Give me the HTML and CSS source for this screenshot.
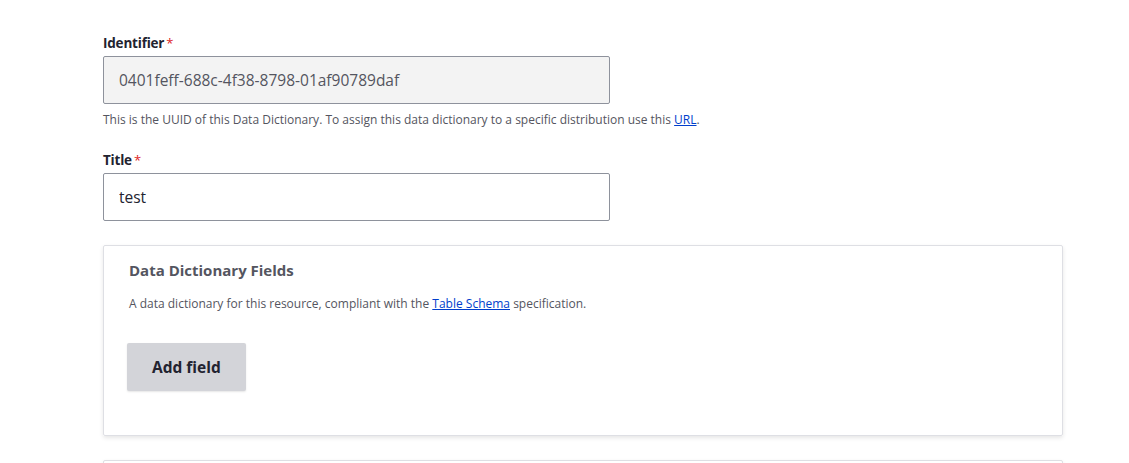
FILE: index.html
```html
<!DOCTYPE html>
<html>
<head>
<meta charset="utf-8">
<link rel="stylesheet" href="styles.css">
</head>
<body>
<form class="form">
  <div class="item">
    <label class="label">Identifier<span class="req">*</span></label>
    <input class="input input--disabled" type="text" value="0401feff-688c-4f38-8798-01af90789daf" disabled>
    <div class="desc">This is the UUID of this Data Dictionary. To assign this data dictionary to a specific distribution use this <a href="#">URL</a>.</div>
  </div>
  <div class="item item--title">
    <label class="label">Title<span class="req">*</span></label>
    <input class="input" type="text" value="test">
  </div>
  <fieldset class="card">
    <div class="card-title">Data Dictionary Fields</div>
    <div class="card-desc">A data dictionary for this resource, compliant with the <a href="#">Table Schema</a> specification.</div>
    <button type="button" class="btn">Add field</button>
  </fieldset>
  <div class="card card--next"></div>
</form>
</body>
</html>
```
FILE: styles.css
```css
html, body {
  margin: 0;
  padding: 0;
  background: #fff;
}
body {
  font-family: "Open Sans", "Noto Sans", sans-serif;
  color: #222330;
}
.form {
  padding: 34px 0 0 103px;
  width: 960px;
}
.item {
  display: flex;
  flex-direction: column;
  align-items: flex-start;
}
.item--title {
  margin-top: 23px;
}
.label {
  font-size: 13.5px;
  font-weight: 700;
  line-height: 18px;
  margin-bottom: 4px;
  display: flex;
  align-items: center;
  letter-spacing: -0.2px;
}
.req {
  color: #dc2323;
  font-size: 13px;
  margin-left: 2px;
  line-height: 18px;
  font-weight: 400;
}
.input {
  box-sizing: border-box;
  width: 507px;
  height: 48px;
  border: 1px solid #8e929c;
  border-radius: 2px;
  padding: 0 15px;
  font-family: inherit;
  font-size: 15.5px;
  color: #222330;
  background: #fff;
  margin: 0;
  outline: none;
}
.input--disabled {
  background: #f3f3f3;
  color: #545560;
  -webkit-text-fill-color: #545560;
  opacity: 1;
}
.desc {
  font-size: 12px;
  line-height: 16px;
  color: #545560;
  margin-top: 8px;
}
a {
  color: #003ecc;
  text-decoration: underline;
}
.card {
  box-sizing: border-box;
  margin: 24px 0 0;
  padding: 15px 25px 44px;
  width: 960px;
  border: 1px solid #dedfe4;
  border-radius: 2px;
  box-shadow: 0 2px 4px rgba(0, 0, 0, 0.1);
  background: #fff;
  min-inline-size: 0;
}
.card-title {
  font-size: 15px;
  font-weight: 700;
  line-height: 18px;
  color: #545560;
}
.card-desc {
  font-size: 12px;
  line-height: 16px;
  color: #545560;
  margin-top: 17px;
}
.btn {
  display: block;
  margin: 31px 0 0 -2px;
  height: 48px;
  padding: 0 25px;
  border: 0;
  border-radius: 2px;
  background: #d3d4d9;
  color: #222330;
  font-family: inherit;
  font-size: 15.5px;
  font-weight: 700;
  box-shadow: 0 1px 2px rgba(0,0,0,0.1);
}
.card--next {
  margin-top: 24px;
  height: 40px;
  padding: 0;
}
```
